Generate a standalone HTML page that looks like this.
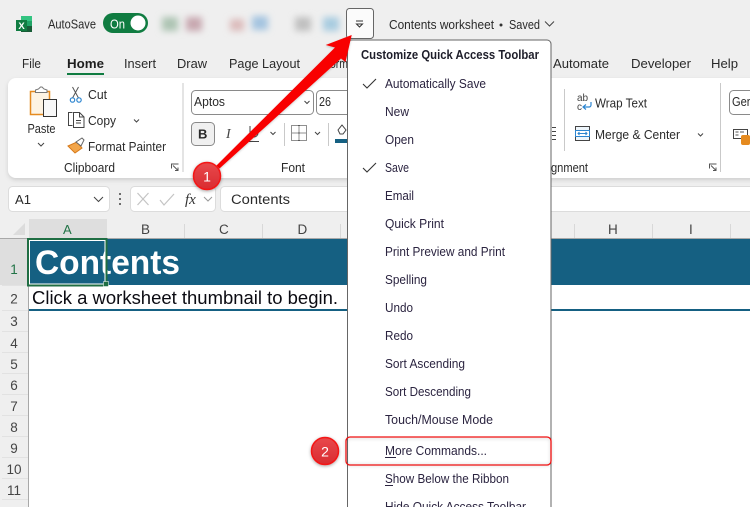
<!DOCTYPE html>
<html><head><meta charset="utf-8"><style>
html,body{margin:0;padding:0;width:750px;height:507px;overflow:hidden;background:#efefef}
svg{display:block}
text{font-family:"Liberation Sans",sans-serif;font-size:12.5px;fill:#2a2a2a}
.m{fill:#2b2440}
.h{font-size:13.5px;fill:#444}
.ic{fill:none;stroke:#444;stroke-width:1}
</style></head><body>
<svg width="750" height="507" viewBox="0 0 750 507" xmlns="http://www.w3.org/2000/svg">
<defs>
<filter id="b" x="-50%" y="-50%" width="200%" height="200%"><feGaussianBlur stdDeviation="3.5"/></filter>
<filter id="s" x="-30%" y="-30%" width="160%" height="160%"><feDropShadow dx="0" dy="1" stdDeviation="1" flood-color="#000" flood-opacity=".2"/></filter>
<filter id="bs" x="-30%" y="-30%" width="160%" height="160%"><feDropShadow dx="0" dy="1" stdDeviation="1.500" flood-color="#000" flood-opacity=".35"/></filter>
<filter id="rs" x="-5%" y="-5%" width="110%" height="125%"><feGaussianBlur stdDeviation="1.500"/></filter>
<filter id="cs" x="-5%" y="-20%" width="110%" height="140%"><feDropShadow dx="0" dy="2" stdDeviation="2" flood-color="#000" flood-opacity=".14"/></filter>
<linearGradient id="bd" x1="0" y1="0" x2="0" y2="1"><stop offset="0" stop-color="#e8494c"/><stop offset="1" stop-color="#d92b30"/></linearGradient>
</defs>
<rect width="750" height="507" fill="#efefef"/>

<!-- title bar -->
<g>
<rect x="21" y="16" width="11" height="16" fill="#33c481"/>
<rect x="21" y="21" width="11" height="6" fill="#21a366"/>
<rect x="21" y="26" width="11" height="6" fill="#185c37"/>
<rect x="16" y="20" width="11" height="11" fill="#107c41"/>
<text x="18.400" y="29" style="font-size:9.500px;font-weight:bold;fill:#fff">X</text>
</g>
<text x="48" y="28.500" textLength="48" lengthAdjust="spacingAndGlyphs">AutoSave</text>
<rect x="103" y="13" width="45" height="20" rx="10" fill="#107c41"/>
<text x="110" y="28.500" textLength="15" lengthAdjust="spacingAndGlyphs" style="fill:#fff;font-size:13px">On</text>
<circle cx="138" cy="23" r="7.500" fill="#fff"/>
<g filter="url(#b)">
<rect x="162" y="17" width="16" height="14" fill="#adc4b3"/>
<rect x="186" y="17" width="16" height="14" fill="#c8a8b0"/>
<rect x="230" y="19" width="14" height="12" fill="#dcbcbc"/>
<rect x="252" y="16" width="16" height="14" fill="#a4c4e0"/>
<rect x="295" y="17" width="16" height="14" fill="#c0c0c0"/>
<rect x="323" y="17" width="16" height="14" fill="#a8cce0"/>
</g>
<rect x="346.500" y="8.500" width="27" height="30" rx="3" fill="#fbfbfb" stroke="#666"/>
<path d="M356 21h7M356.500 24l3 3 3-3z" fill="none" stroke="#333"/>
<text x="389" y="29" textLength="105" lengthAdjust="spacingAndGlyphs">Contents worksheet</text>
<circle cx="501" cy="25" r="1.500" fill="#333"/>
<text x="509" y="29" textLength="31" lengthAdjust="spacingAndGlyphs">Saved</text>
<path d="M545 21.500l4.500 4.500 4.500-4.500" class="ic"/>

<!-- tabs -->
<text x="22" y="68" textLength="19" lengthAdjust="spacingAndGlyphs">File</text>
<text x="67" y="68" textLength="37" lengthAdjust="spacingAndGlyphs" style="font-weight:bold;fill:#1e1e1e">Home</text>
<rect x="67" y="73" width="37" height="2" fill="#107c41"/>
<text x="124" y="68" textLength="32" lengthAdjust="spacingAndGlyphs">Insert</text>
<text x="177" y="68" textLength="30" lengthAdjust="spacingAndGlyphs">Draw</text>
<text x="229" y="68" textLength="71" lengthAdjust="spacingAndGlyphs">Page Layout</text>
<text x="330" y="68" textLength="18" lengthAdjust="spacingAndGlyphs">orm</text>
<text x="553" y="68" textLength="56" lengthAdjust="spacingAndGlyphs">Automate</text>
<text x="631" y="68" textLength="60" lengthAdjust="spacingAndGlyphs">Developer</text>
<text x="711" y="68" textLength="27" lengthAdjust="spacingAndGlyphs">Help</text>

<!-- ribbon -->
<rect x="8" y="78" width="760" height="100" rx="8" fill="#fff" filter="url(#cs)"/>
<!-- paste -->
<rect x="30.500" y="91.500" width="19" height="23" fill="#fdf3e3" stroke="#e58a1f" stroke-width="1.500"/>
<path d="M35.500 92.500v-2.500l3-1 2-2h1.500l2 2 3 1v2.500z" fill="#fff" stroke="#777"/>
<rect x="43.500" y="99.500" width="13" height="17" fill="#f8f8f8" stroke="#333"/>
<text x="27.500" y="133" textLength="28" lengthAdjust="spacingAndGlyphs">Paste</text>
<path d="M38 143l3 3 3-3" class="ic"/>
<!-- cut -->
<path d="M72.500 87l6 11M78.500 87l-6 11" fill="none" stroke="#555"/>
<circle cx="72.500" cy="100" r="2.200" fill="none" stroke="#2e86d0" stroke-width="1.200"/><circle cx="79" cy="100" r="2.200" fill="none" stroke="#2e86d0" stroke-width="1.200"/>
<text x="88" y="99" textLength="19" lengthAdjust="spacingAndGlyphs">Cut</text>
<path d="M72.500 112.500h-4v13h4M73.500 127.500v-15h6l4.500 4.500v10.500zM79.500 112.500v4.500h4.500" class="ic"/>
<path d="M76 120.500h5M76 123h5" class="ic"/>
<text x="88" y="125" textLength="28" lengthAdjust="spacingAndGlyphs">Copy</text>
<path d="M134 119.500l2.500 2.500 2.500-2.500" class="ic"/>
<path d="M68 146l9-4 5 6-7 5z" fill="#f2a54a" stroke="#d87a1a"/>
<path d="M76 142l6-4 2 2-3 6z" fill="#fff" stroke="#666"/>
<text x="88" y="151" textLength="78" lengthAdjust="spacingAndGlyphs">Format Painter</text>
<text x="64" y="172" textLength="51" lengthAdjust="spacingAndGlyphs">Clipboard</text>
<path d="M171.500 168.500v-4.500h7M173 165.500l5 5M178 167.500v3h-3" fill="none" stroke="#555"/>
<rect x="182.500" y="83" width="1" height="89" fill="#c9c9c9"/>
<!-- font -->
<rect x="191.500" y="90.500" width="122" height="24" rx="4" fill="#fff" stroke="#8a8a8a"/>
<text x="194" y="106" textLength="31" lengthAdjust="spacingAndGlyphs">Aptos</text>
<path d="M304.500 101l2.500 2.500 2.500-2.500" class="ic"/>
<rect x="316.500" y="90.500" width="40" height="24" rx="4" fill="#fff" stroke="#8a8a8a"/>
<text x="319" y="106" textLength="12" lengthAdjust="spacingAndGlyphs">26</text>
<rect x="191.500" y="122.500" width="23" height="23" rx="4" fill="#f0f0f0" stroke="#8a8a8a"/>
<text x="198" y="138.500" style="font-weight:bold;font-size:13px">B</text>
<text x="226" y="138" style="font-family:'Liberation Serif',serif;font-style:italic;font-size:14px;fill:#444">I</text>
<path d="M250 126v7a4 4 0 0 0 8 0v-7M249 141.500h10" class="ic"/>
<path d="M270.500 132l2.500 2.500 2.500-2.500" class="ic"/>
<rect x="284" y="123" width="1" height="23" fill="#c9c9c9"/>
<path d="M291.500 125.500h15v15h-15zM299 125.500v15M291.500 133h15" fill="none" stroke="#222" stroke-dasharray="1 1"/>
<path d="M315 132l2.500 2.500 2.500-2.500" class="ic"/>
<rect x="328" y="123" width="1" height="23" fill="#c9c9c9"/>
<path d="M338 130l4-5 4 5-3 4h-3z" class="ic"/>
<rect x="335" y="139" width="16" height="4" fill="#156082"/>
<text x="281" y="172" textLength="24" lengthAdjust="spacingAndGlyphs">Font</text>
<!-- alignment -->
<path d="M552 127.500h4M552 131.500h4M552 135.500h4M552 139.500h4" class="ic"/>
<rect x="564" y="89" width="1" height="62" fill="#c9c9c9"/>
<text x="577" y="101" style="font-size:10px;fill:#444">ab</text>
<text x="577" y="110" style="font-size:10px;fill:#444">c</text>
<path d="M591 102v3a2 2 0 0 1-2 2h-5M586 104.500l-3 2.500 3 2.500" fill="none" stroke="#2e86d0" stroke-width="1.200"/>
<text x="595" y="107.500" textLength="52" lengthAdjust="spacingAndGlyphs">Wrap Text</text>
<rect x="575.500" y="126.500" width="14" height="14" fill="#eef6fc" stroke="#444"/>
<rect x="575.500" y="130.500" width="14" height="6" fill="#fff" stroke="#2e86d0"/>
<path d="M578 133.500h9M579.500 132l-1.500 1.500 1.500 1.500M585.500 132l1.500 1.500-1.500 1.500" fill="none" stroke="#2e86d0"/>
<text x="595" y="139" textLength="85" lengthAdjust="spacingAndGlyphs">Merge &amp; Center</text>
<path d="M698 133.500l2.500 2.500 2.500-2.500" class="ic"/>
<text x="551" y="172" textLength="37" lengthAdjust="spacingAndGlyphs">gnment</text>
<path d="M709.500 168.500v-4.500h7M711 165.500l5 5M716 167.500v3h-3" fill="none" stroke="#555"/>
<rect x="720" y="83" width="1" height="89" fill="#c9c9c9"/>
<rect x="729.500" y="90.500" width="40" height="24" rx="4" fill="#fff" stroke="#8a8a8a"/>
<text x="732" y="106" textLength="21" lengthAdjust="spacingAndGlyphs">Gen</text>
<rect x="733.500" y="129.500" width="14" height="9" fill="#fff" stroke="#444"/>
<path d="M735.500 132h3M740 132h4M735.500 135h3" fill="none" stroke="#555"/>
<rect x="741" y="135" width="9" height="10" rx="2" fill="#e58a1f"/>

<!-- formula bar -->
<rect x="8.500" y="186.500" width="101" height="25" rx="4" fill="#fff" stroke="#dcdcdc"/>
<text x="15" y="204" textLength="16" lengthAdjust="spacingAndGlyphs" style="font-size:13px">A1</text>
<path d="M94 197l4.500 4.500 4.500-4.500" class="ic"/>
<circle cx="120" cy="194" r="1" fill="#444"/><circle cx="120" cy="199" r="1" fill="#444"/><circle cx="120" cy="204" r="1" fill="#444"/>
<rect x="130.500" y="186.500" width="85" height="25" rx="4" fill="#fff" stroke="#dcdcdc"/>
<path d="M137.500 193l11 12M148.500 193l-11 12M160 200l4 5 10-11" fill="none" stroke="#c4c4c4" stroke-width="1.200"/>
<text x="185" y="204" style="font-family:'Liberation Serif',serif;font-style:italic;font-size:15px;fill:#333">fx</text>
<path d="M204 197l4 4 4-4" fill="none" stroke="#999"/>
<rect x="220.500" y="186.500" width="560" height="25" rx="4" fill="#fff" stroke="#dcdcdc"/>
<text x="231" y="204" textLength="59" lengthAdjust="spacingAndGlyphs" style="font-size:13.500px">Contents</text>

<!-- column headers -->
<rect x="0" y="219" width="750" height="19" fill="#efefef"/>
<path d="M25 223v12h-12z" fill="#dcdcdc"/>
<rect x="29" y="219" width="78" height="19" fill="#dedede"/>
<rect x="0" y="238" width="750" height="1" fill="#a8a8a8"/>
<g fill="#d8d8d8">
<rect x="184" y="224" width="1" height="14"/><rect x="262" y="224" width="1" height="14"/><rect x="340" y="224" width="1" height="14"/>
<rect x="574" y="224" width="1" height="14"/><rect x="652" y="224" width="1" height="14"/><rect x="730" y="224" width="1" height="14"/>
</g>
<text x="63" y="234" style="font-size:13px;fill:#217346">A</text>
<text x="141" y="234" class="h">B</text>
<text x="219" y="234" class="h">C</text>
<text x="297.500" y="234" class="h">D</text>
<text x="608" y="234" class="h">H</text>
<text x="689" y="234" class="h">I</text>

<!-- row headers -->
<rect x="0" y="239" width="28" height="268" fill="#efefef"/>
<rect x="0" y="239" width="28" height="46" fill="#dedede"/>
<rect x="28" y="239" width="1" height="268" fill="#a8a8a8"/>
<g fill="#e2e2e2">
<rect x="2" y="285" width="26" height="1"/><rect x="2" y="310" width="26" height="1"/><rect x="2" y="331" width="26" height="1"/><rect x="2" y="352" width="26" height="1"/><rect x="2" y="373" width="26" height="1"/><rect x="2" y="394" width="26" height="1"/><rect x="2" y="415" width="26" height="1"/><rect x="2" y="436" width="26" height="1"/><rect x="2" y="457" width="26" height="1"/><rect x="2" y="478" width="26" height="1"/><rect x="2" y="499" width="26" height="1"/>
</g>
<g text-anchor="middle">
<text x="14" y="274" style="font-size:13.500px;fill:#217346">1</text>
<text x="14" y="303.500" class="h">2</text>
<text x="14" y="326" class="h">3</text>
<text x="14" y="348" class="h">4</text>
<text x="14" y="369" class="h">5</text>
<text x="14" y="390" class="h">6</text>
<text x="14" y="411" class="h">7</text>
<text x="14" y="432" class="h">8</text>
<text x="14" y="453" class="h">9</text>
<text x="14" y="474" class="h">10</text>
<text x="14" y="495" class="h">11</text>
</g>

<!-- sheet -->
<rect x="29" y="239" width="721" height="268" fill="#fff"/>
<rect x="29" y="239" width="721" height="46" fill="#156082"/>
<rect x="29" y="309" width="721" height="2" fill="#156082"/>
<text x="35" y="274" textLength="145" lengthAdjust="spacingAndGlyphs" style="font-size:34px;font-weight:bold;fill:#fff">Contents</text>
<text x="32" y="304" textLength="306" lengthAdjust="spacingAndGlyphs" style="font-size:18px;fill:#0b0b12">Click a worksheet thumbnail to begin.</text>
<!-- selection -->
<rect x="28" y="239" width="78.500" height="46.500" fill="none" stroke="#1f6e43" stroke-width="2"/>
<rect x="29.500" y="240.500" width="75.500" height="43.500" fill="none" stroke="#fff"/>
<rect x="103.500" y="281.500" width="5" height="5" fill="#1f6e43" stroke="#fff" stroke-width=".5"/>

<!-- menu -->
<path d="M347.500 507V44a4 4 0 0 1 4-4h195.500a4 4 0 0 1 4 4V507" fill="#fff" stroke="#666"/>
<text x="361" y="59" textLength="178" lengthAdjust="spacingAndGlyphs" style="font-weight:bold;fill:#1e1e2a">Customize Quick Access Toolbar</text>
<path d="M363 84l4 4 9-9M363 168l4 4 9-9" fill="none" stroke="#333" stroke-width="1.100"/>
<text class="m" x="385" y="88" textLength="101" lengthAdjust="spacingAndGlyphs">Automatically Save</text>
<text class="m" x="385" y="116" textLength="24" lengthAdjust="spacingAndGlyphs">New</text>
<text class="m" x="385" y="144" textLength="29" lengthAdjust="spacingAndGlyphs">Open</text>
<text class="m" x="385" y="172" textLength="24" lengthAdjust="spacingAndGlyphs">Save</text>
<text class="m" x="385" y="200" textLength="29" lengthAdjust="spacingAndGlyphs">Email</text>
<text class="m" x="385" y="228" textLength="59" lengthAdjust="spacingAndGlyphs">Quick Print</text>
<text class="m" x="385" y="256" textLength="120" lengthAdjust="spacingAndGlyphs">Print Preview and Print</text>
<text class="m" x="385" y="284" textLength="42" lengthAdjust="spacingAndGlyphs">Spelling</text>
<text class="m" x="385" y="312" textLength="28" lengthAdjust="spacingAndGlyphs">Undo</text>
<text class="m" x="385" y="340" textLength="28" lengthAdjust="spacingAndGlyphs">Redo</text>
<text class="m" x="385" y="368" textLength="80" lengthAdjust="spacingAndGlyphs">Sort Ascending</text>
<text class="m" x="385" y="396" textLength="86" lengthAdjust="spacingAndGlyphs">Sort Descending</text>
<text class="m" x="385" y="424" textLength="108" lengthAdjust="spacingAndGlyphs">Touch/Mouse Mode</text>
<text class="m" x="385" y="455" textLength="102" lengthAdjust="spacingAndGlyphs">More Commands...</text>
<rect x="385" y="457" width="11" height="1" fill="#2b2440"/>
<text class="m" x="385" y="483" textLength="124" lengthAdjust="spacingAndGlyphs">Show Below the Ribbon</text>
<rect x="385" y="485" width="8" height="1" fill="#2b2440"/>
<text class="m" x="385" y="511" textLength="141" lengthAdjust="spacingAndGlyphs">Hide Quick Access Toolbar</text>

<!-- red box 2 -->
<rect x="346" y="438" width="205" height="27" rx="4" fill="none" stroke="#000" stroke-opacity=".18" stroke-width="1.500" filter="url(#rs)"/>
<rect x="346" y="437" width="205" height="28" rx="4" fill="none" stroke="#f01010" stroke-width="1.300"/>

<!-- arrow 1 -->
<path d="M351.700 35L325.700 45L335 47.500L216.500 165.500L219.500 168.500L341 58.500L345.500 62Z" fill="#f80000" filter="url(#s)"/>

<!-- badges -->
<circle cx="207" cy="176" r="13.500" fill="url(#bd)" stroke="#f41414" stroke-width="1.500" filter="url(#bs)"/>
<text x="207" y="181.500" text-anchor="middle" style="font-size:14px;fill:#fff">1</text>
<circle cx="325" cy="451" r="13.500" fill="url(#bd)" stroke="#f41414" stroke-width="1.500" filter="url(#bs)"/>
<text x="325" y="456.500" text-anchor="middle" style="font-size:14px;fill:#fff">2</text>
</svg>
</body></html>
